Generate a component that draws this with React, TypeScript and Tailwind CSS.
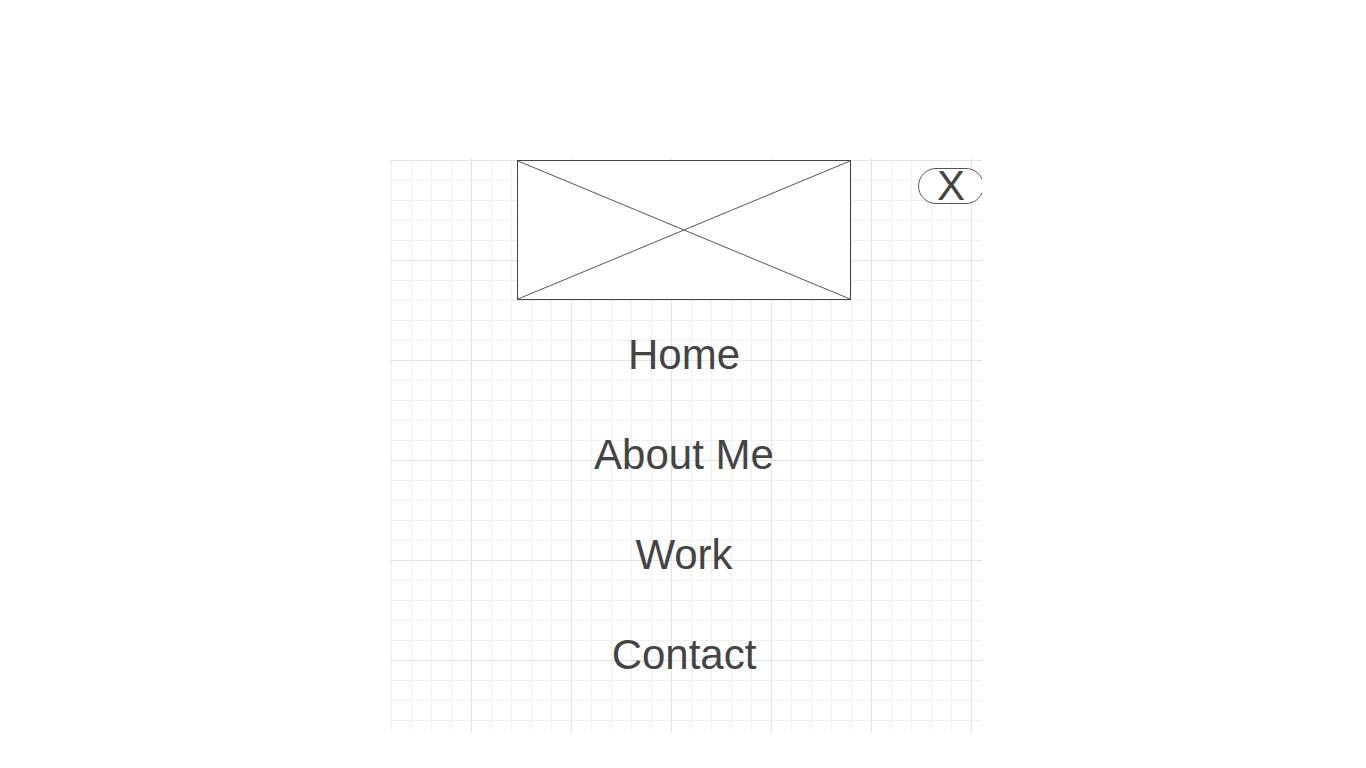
const gridBg = {
  backgroundImage: [
    "linear-gradient(to right, #e3e3e3 1px, transparent 1px)",
    "linear-gradient(to bottom, #e3e3e3 1px, transparent 1px)",
    "linear-gradient(to right, #f0f0f0 1px, transparent 1px)",
    "linear-gradient(to bottom, #f0f0f0 1px, transparent 1px)",
  ].join(","),
  backgroundSize: "100px 100px, 100px 100px, 20px 20px, 20px 20px",
  backgroundPosition: "81px 0, 0 1px, 1px 0, 0 1px",
};

const links = ["Home", "About Me", "Work", "Contact"];

export default function App() {
  return (
    <div className="min-h-screen w-full bg-white pt-[159px] font-['Liberation_Sans',Arial,sans-serif]">
      <div
        className="relative ml-[390px] h-[573px] w-[592px] overflow-hidden"
        style={gridBg}
      >
        {/* Logo placeholder */}
        <div className="ml-[127px] mt-px w-[334px]">
          <div className="h-[140px] w-full border border-[#444] bg-white">
            <svg className="block h-full w-full" viewBox="0 0 332 138" preserveAspectRatio="none">
              <line x1="0" y1="0" x2="332" y2="138" stroke="#555" strokeWidth="1" />
              <line x1="332" y1="0" x2="0" y2="138" stroke="#555" strokeWidth="1" />
            </svg>
          </div>

          {/* Nav links */}
          <nav className="mt-[5px] flex flex-col">
            {links.map((l) => (
              <a
                key={l}
                className="flex h-[100px] items-center justify-center text-[42px] leading-none text-[#444]"
              >
                {l}
              </a>
            ))}
          </nav>
        </div>

        {/* Close button */}
        <button className="absolute left-[528px] top-[9px] flex h-[36px] w-[66px] items-center justify-center rounded-full border border-[#555] bg-white text-[42px] leading-none text-[#444]">
          X
        </button>
      </div>
    </div>
  );
}
